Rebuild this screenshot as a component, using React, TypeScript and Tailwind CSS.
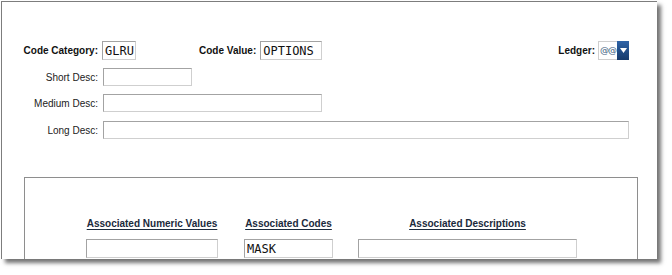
const labelFont = "font-['Liberation_Sans',Arial,sans-serif]";

function Field({ w, h = 19, value = "" }: { w: number; h?: number; value?: string }) {
  return (
    <div
      className="flex items-center bg-white border border-[#cfcfcf] border-t-[#a3a3a3] border-l-[#a3a3a3] px-[2px] text-[12px] leading-none text-[#111] font-['DejaVu_Sans_Mono',monospace] overflow-hidden"
      style={{ width: w, height: h }}
    >
      {value}
    </div>
  );
}

export default function App() {
  return (
    <div className={`w-[672px] h-[275px] bg-white ${labelFont}`}>
      <div className="ml-px mt-px w-[656px] h-[258px] bg-white border-t border-l border-[#7d7d7d] shadow-[4px_4px_4px_rgba(0,0,0,0.55)] overflow-hidden">
        {/* header fields */}
        <div className="pt-[39px] pr-[28px]">
          <div className="flex items-center h-[19px]">
            <div className="w-[97px] text-right text-[10px] font-bold text-[#111] pr-px">Code Category:</div>
            <div className="ml-[3px]">
              <Field w={34} value="GLRU" />
            </div>
            <div className="ml-[63px] text-[10px] font-bold text-[#111]">Code Value:</div>
            <div className="ml-[4px]">
              <Field w={62} value="OPTIONS" />
            </div>
            <div className="ml-auto flex items-center">
              <span className="text-[10px] font-bold text-[#111] mr-[3px]">Ledger:</span>
              <div className="flex h-[19px]">
                <div className="w-[19px] h-full bg-white border border-[#cfcfcf] border-r-0 flex items-center text-[9px] text-[#3a5a80] pl-px leading-none tracking-[-1px] overflow-hidden font-['DejaVu_Sans',sans-serif]">
                  @@
                </div>
                <div className="w-[12px] h-full bg-gradient-to-b from-[#2f64a8] to-[#163a6b] flex items-center justify-center">
                  <svg width="7" height="5" viewBox="0 0 7 5">
                    <path d="M0 0h7L3.5 5z" fill="#fff" />
                  </svg>
                </div>
              </div>
            </div>
          </div>

          <div className="flex items-center mt-[8px] h-[18px]">
            <div className="w-[97px] text-right text-[10px] text-[#222] pr-px">Short Desc:</div>
            <div className="ml-[4px]">
              <Field w={89} h={18} />
            </div>
          </div>

          <div className="flex items-center mt-[8px] h-[18px]">
            <div className="w-[97px] text-right text-[10px] text-[#222] pr-px">Medium Desc:</div>
            <div className="ml-[4px]">
              <Field w={219} h={18} />
            </div>
          </div>

          <div className="flex items-center mt-[9px] h-[18px]">
            <div className="w-[97px] text-right text-[10px] text-[#222] pr-px">Long Desc:</div>
            <div className="ml-[4px] flex-1">
              <Field w={526} h={18} />
            </div>
          </div>
        </div>

        {/* associated values box */}
        <div className="ml-[22px] mt-[38px] w-[614px] h-[120px] border border-[#8e8e8e] pl-[61px] pt-[40px]">
          <div className="flex">
            <div className="w-[132px] flex flex-col items-center">
              <span className="text-[10px] leading-[12px] font-bold text-[#1b2a3c] underline underline-offset-2 whitespace-nowrap">
                Associated Numeric Values
              </span>
              <div className="mt-[9px]">
                <Field w={132} />
              </div>
            </div>
            <div className="ml-[26px] w-[89px] flex flex-col items-center">
              <span className="text-[10px] leading-[12px] font-bold text-[#1b2a3c] underline underline-offset-2 whitespace-nowrap">
                Associated Codes
              </span>
              <div className="mt-[9px]">
                <Field w={89} value="MASK" />
              </div>
            </div>
            <div className="ml-[25px] w-[219px] flex flex-col items-center">
              <span className="text-[10px] leading-[12px] font-bold text-[#1b2a3c] underline underline-offset-2 whitespace-nowrap">
                Associated Descriptions
              </span>
              <div className="mt-[9px]">
                <Field w={219} />
              </div>
            </div>
          </div>
        </div>
      </div>
    </div>
  );
}
